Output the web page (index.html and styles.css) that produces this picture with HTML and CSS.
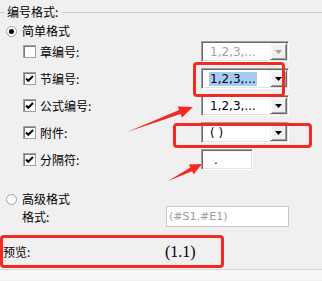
FILE: index.html
```html
<!DOCTYPE html>
<html lang="zh">
<head>
    <meta charset="UTF-8">
    <title>编号格式</title>
    <link rel="stylesheet" href="styles.css">
</head>
<body>
    <div class="panel">
        <div class="group-title">
            <span class="line short"></span>
            <span class="title-text">编号格式:</span>
            <span class="line"></span>
        </div>

        <div class="option"><span class="radio checked"></span>简单格式</div>

        <div class="rows">
            <div class="row">
                <label class="cb-label"><span class="cb"></span>章编号:</label>
                <div class="combo disabled">
                    <span class="combo-text">1,2,3,...</span>
                    <span class="drop"><svg width="7" height="4" viewBox="0 0 7 4"><polygon points="0,0 7,0 3.5,4" fill="#a0a0a0"/></svg></span>
                </div>
            </div>
            <div class="row">
                <label class="cb-label"><span class="cb"><svg width="11" height="11" viewBox="0 0 11 11"><path d="M2 5.5 L4.3 7.8 L9 3" fill="none" stroke="#000" stroke-width="2"/></svg></span>节编号:</label>
                <div class="combo">
                    <span class="combo-text"><span class="selected">1,2,3,...</span></span>
                    <span class="drop"><svg width="7" height="4" viewBox="0 0 7 4"><polygon points="0,0 7,0 3.5,4" fill="#000"/></svg></span>
                </div>
            </div>
            <div class="row">
                <label class="cb-label"><span class="cb"><svg width="11" height="11" viewBox="0 0 11 11"><path d="M2 5.5 L4.3 7.8 L9 3" fill="none" stroke="#000" stroke-width="2"/></svg></span>公式编号:</label>
                <div class="combo">
                    <span class="combo-text">1,2,3,...</span>
                    <span class="drop"><svg width="7" height="4" viewBox="0 0 7 4"><polygon points="0,0 7,0 3.5,4" fill="#000"/></svg></span>
                </div>
            </div>
            <div class="row">
                <label class="cb-label"><span class="cb"><svg width="11" height="11" viewBox="0 0 11 11"><path d="M2 5.5 L4.3 7.8 L9 3" fill="none" stroke="#000" stroke-width="2"/></svg></span>附件:</label>
                <div class="combo">
                    <span class="combo-text">( )</span>
                    <span class="drop"><svg width="7" height="4" viewBox="0 0 7 4"><polygon points="0,0 7,0 3.5,4" fill="#000"/></svg></span>
                </div>
            </div>
            <div class="row">
                <label class="cb-label"><span class="cb"><svg width="11" height="11" viewBox="0 0 11 11"><path d="M2 5.5 L4.3 7.8 L9 3" fill="none" stroke="#000" stroke-width="2"/></svg></span>分隔符:</label>
                <div class="textbox sep">.</div>
            </div>
        </div>

        <div class="option advanced"><span class="radio"></span>高级格式</div>

        <div class="format-row">
            <span class="format-label">格式:</span>
            <div class="textbox format">(#S1.#E1)</div>
        </div>

        <div class="preview">
            <span class="preview-label">预览:</span>
            <span class="preview-value">(1.1)</span>
        </div>

        <div class="bottom"></div>
    </div>

    <!-- annotations drawn over the dialog -->
    <div class="mark mark-section"></div>
    <div class="mark mark-attach"></div>
    <div class="mark mark-preview"></div>
    <svg class="arrows" width="322" height="281" viewBox="0 0 322 281">
        <polygon points="127,132 180.6,113.9 182,117.6 193,107 177.8,106.4 179.2,110.1" fill="#f42a22"/>
        <polygon points="168,181 192.2,171.2 193.8,174.3 202,164 188.8,164.5 190.4,167.6" fill="#f42a22"/>
    </svg>
</body>
</html>
```

FILE: styles.css
```css
body {
    margin: 0;
    width: 322px;
    height: 281px;
    overflow: hidden;
    position: relative;
    background-color: #f0f0f0;
    font-family: "Noto Sans CJK SC", "Noto Sans", sans-serif;
    font-size: 12px;
    line-height: 14px;
    color: #000;
}
.group-title {
    display: flex;
    align-items: center;
    height: 24px;
}
.line {
    flex: 1;
    border-top: 1px solid #cdcdcd;
}
.line.short {
    flex: none;
    width: 5px;
}
.title-text {
    padding: 0 4px 0 2px;
}
.option {
    display: flex;
    align-items: center;
    gap: 5px;
    height: 14px;
    padding-left: 6px;
}
.option.advanced {
    margin-top: 19px;
}
.radio {
    width: 11px;
    height: 11px;
    box-sizing: border-box;
    border: 1px solid #a0a0a0;
    border-radius: 50%;
    background-color: white;
    display: flex;
    align-items: center;
    justify-content: center;
}
.radio.checked::after {
    content: "";
    width: 5px;
    height: 5px;
    border-radius: 50%;
    background-color: #000;
}
.rows {
    padding-left: 23px;
}
.row {
    display: flex;
    align-items: center;
    height: 27px;
}
.cb-label {
    width: 178px;
    display: flex;
    align-items: center;
    gap: 4px;
}
.cb {
    width: 13px;
    height: 13px;
    box-sizing: border-box;
    border: 1px solid #a0a0a0;
    box-shadow: inset 1px 1px #7c7c7c;
    background-color: white;
    display: flex;
    align-items: center;
    justify-content: center;
}
.combo {
    width: 88px;
    height: 21px;
    box-sizing: border-box;
    display: flex;
    background-color: white;
    border: 1px solid;
    border-color: #a0a0a0 #fff #fff #a0a0a0;
    box-shadow: inset 1px 1px #696969, inset -1px -1px #e3e3e3;
    font-family: "DejaVu Sans", sans-serif;
    font-size: 12px;
}
.combo-text {
    flex: 1;
    display: flex;
    align-items: center;
    padding-left: 8px;
}
.combo.disabled .combo-text {
    color: #a0a0a0;
}
.selected {
    background-color: #a6cdf1;
    padding: 0 1px;
    margin-left: -1px;
}
.drop {
    width: 17px;
    margin: 1px 1px 1px 0;
    box-sizing: border-box;
    background-color: #f0f0f0;
    border: 1px solid;
    border-color: #f0f0f0 #696969 #696969 #f0f0f0;
    box-shadow: inset 1px 1px #fff, inset -1px -1px #a0a0a0;
    display: flex;
    align-items: center;
    justify-content: center;
}
.textbox {
    height: 21px;
    box-sizing: border-box;
    background-color: white;
    display: flex;
    align-items: center;
    font-family: "DejaVu Sans", sans-serif;
}
.textbox.sep {
    width: 52px;
    padding-left: 12px;
    border: 1px solid;
    border-color: #a0a0a0 #fff #fff #a0a0a0;
    box-shadow: inset 1px 1px #696969, inset -1px -1px #e3e3e3;
}
.format-row {
    display: flex;
    align-items: center;
    height: 21px;
    padding-left: 22px;
}
.format-label {
    width: 144px;
}
.textbox.format {
    width: 123px;
    padding-left: 2px;
    border: 1px solid #c8c8c8;
    color: #9d9d9d;
    font-size: 11px;
}
.preview {
    display: flex;
    align-items: center;
    height: 33px;
    margin-top: 7px;
    padding-top: 2px;
    box-sizing: border-box;
}
.preview-label {
    width: 162px;
    padding-left: 3px;
}
.preview-value {
    font-family: "Liberation Serif", serif;
    font-size: 16px;
}
.bottom {
    margin-top: 2px;
    height: 10px;
    border-top: 1px solid #d8d8d8;
    background-color: #f8f8f8;
}
.mark {
    position: absolute;
    box-sizing: border-box;
    border: 3px solid #f42a22;
    border-radius: 4px;
}
.mark-section {
    left: 193px;
    top: 62px;
    width: 92px;
    height: 35px;
}
.mark-attach {
    left: 173px;
    top: 123px;
    width: 139px;
    height: 25px;
}
.mark-preview {
    left: 0;
    top: 235px;
    width: 224px;
    height: 33px;
}
.arrows {
    position: absolute;
    left: 0;
    top: 0;
}
```
